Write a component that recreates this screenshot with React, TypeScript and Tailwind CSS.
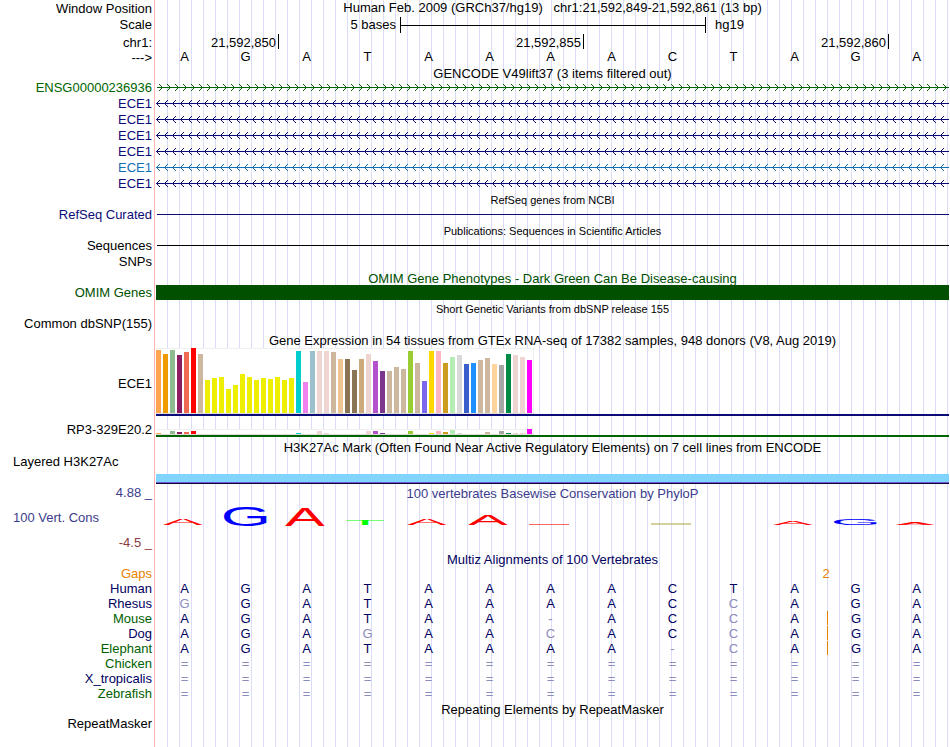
import type { ReactNode } from "react";

interface LabelProps {
  children?: ReactNode;
  className?: string;
}

interface RowProps {
  label?: ReactNode;
  labelClass?: string;
  className?: string;
  children?: ReactNode;
}

interface Tissue {
  color: string;
  ece1: number;
  rp3: number;
}

interface Species {
  name: string;
  color: string;
  bases: string;
  insertion?: boolean;
}

const t = (color: string, ece1: number, rp3 = 0): Tissue => ({ color, ece1, rp3 });

// GTEx tissues in track order, values are bar heights
const tissues: Tissue[] = [
  t("#ffa54f", 63, 1),
  t("#ee9a00", 59),
  t("#8fbc8f", 63, 3),
  t("#8b1c62", 58, 2),
  t("#ee6a50", 61, 2),
  t("#ff0000", 65, 3),
  t("#cdb79e", 59),
  t("#eeee00", 33),
  t("#eeee00", 35),
  t("#eeee00", 36),
  t("#eeee00", 24),
  t("#eeee00", 28),
  t("#eeee00", 39),
  t("#eeee00", 36),
  t("#eeee00", 33),
  t("#eeee00", 35),
  t("#eeee00", 34),
  t("#eeee00", 36),
  t("#eeee00", 33),
  t("#eeee00", 35),
  t("#00cdcd", 62, 1),
  t("#ee82ee", 31),
  t("#9ac0cd", 62),
  t("#eed5d2", 62, 3),
  t("#eed5d2", 62, 1),
  t("#cdb79e", 61),
  t("#eec591", 54),
  t("#8b7355", 54),
  t("#8b7355", 43),
  t("#cdaa7d", 54),
  t("#eed5d2", 59, 3),
  t("#b452cd", 52, 3),
  t("#7a378b", 42, 1),
  t("#cdb79e", 42),
  t("#cdb79e", 46),
  t("#cdb79e", 44),
  t("#9acd32", 62, 3),
  t("#cdb79e", 50),
  t("#7a67ee", 32),
  t("#ffd700", 62, 1),
  t("#ffb6c1", 62, 3),
  t("#cd9b1d", 50, 2),
  t("#b4eeb4", 56, 4),
  t("#d9d9d9", 58, 1),
  t("#3a5fcd", 49),
  t("#1e90ff", 50),
  t("#cdb79e", 53),
  t("#cdb79e", 55, 2),
  t("#ffd39b", 49),
  t("#a6a6a6", 48, 3),
  t("#008b45", 59, 1),
  t("#eed5d2", 58, 1),
  t("#eed5d2", 56, 1),
  t("#ff00ff", 53, 5),
];

const species: Species[] = [
  { name: "Human", color: "text-[#000060]", bases: "AGATAAAACTAGA" },
  { name: "Rhesus", color: "text-[#000060]", bases: "gGATAAAACcAGA" },
  { name: "Mouse", color: "text-[#006000]", bases: "AGATAA-ACcAGA", insertion: true },
  { name: "Dog", color: "text-[#000060]", bases: "AGAgAAcACcAGA", insertion: true },
  { name: "Elephant", color: "text-[#006000]", bases: "AGATAAAA-cAGA", insertion: true },
  { name: "Chicken", color: "text-[#006000]", bases: "=============" },
  { name: "X_tropicalis", color: "text-[#000060]", bases: "=============" },
  { name: "Zebrafish", color: "text-[#006000]", bases: "=============" },
];

const logoBoxes: Record<string, { box: string; baseline: number; color: string; width: string }> = {
  A: { box: "0 0 67 69", baseline: 69, color: "#ff0000", width: "w-[40px]" },
  G: { box: "5 0 68 71", baseline: 70, color: "#0000ff", width: "w-[44px]" },
  T: { box: "2 0 57 69", baseline: 69, color: "#00ff00", width: "w-[38px]" },
  C: { box: "5 0 63 71", baseline: 70, color: "#b9b35f", width: "w-[40px]" },
};

// letter height is the conservation score of the base
const logo = [
  { base: "A", height: 6 },
  { base: "G", height: 19 },
  { base: "A", height: 18 },
  { base: "T", height: 5 },
  { base: "A", height: 6 },
  { base: "A", height: 10 },
  { base: "A", height: 1 },
  { base: "A", height: 0 },
  { base: "C", height: 2 },
  { base: "T", height: 0 },
  { base: "A", height: 4 },
  { base: "G", height: 6 },
  { base: "A", height: 3 },
];

const Label = ({ children, className = "text-right" }: LabelProps) => (
  <div className="w-[156px] shrink-0 self-stretch bg-white pr-px">
    <div className={`h-full border-r border-[#ffb4b4] pr-[2px] whitespace-nowrap ${className}`}>
      {children}
    </div>
  </div>
);

const Row = ({ label, labelClass, className = "h-4 leading-4", children }: RowProps) => (
  <div className={`flex ${className}`}>
    <Label className={labelClass}>{label}</Label>
    <div className="min-w-0 flex-1">{children}</div>
  </div>
);

const TitleRow = ({
  children,
  className = "leading-[13px]",
  height = "h-4",
  label,
  labelClass,
}: RowProps & { height?: string }) => (
  <div className={`flex ${height}`}>
    <Label className={labelClass}>{label}</Label>
    <h2 className={`flex-1 self-end text-center whitespace-pre ${className}`}>{children}</h2>
  </div>
);

const GeneLine = ({ id, color, forward }: { id: string; color: string; forward?: boolean }) => (
  <svg className="block h-[15px] w-full" shapeRendering="crispEdges" fill={color}>
    <defs>
      <pattern id={id} width="8" height="15" patternUnits="userSpaceOnUse">
        {forward ? (
          <path d="M5 6h1v1h-1z M4 5h1v1h-1z M3 4h1v1h-1z M5 8h1v1h-1z M4 9h1v1h-1z M3 10h1v1h-1z" />
        ) : (
          <path d="M1 6h1v1h-1z M2 5h1v1h-1z M3 4h1v1h-1z M1 8h1v1h-1z M2 9h1v1h-1z M3 10h1v1h-1z" />
        )}
      </pattern>
    </defs>
    <rect width="100%" height="15" fill={`url(#${id})`} />
    <rect x={forward ? 1 : 0} y="7" width="100%" height="1" />
  </svg>
);

const Expression = ({ gene }: { gene: "ece1" | "rp3" }) => (
  <div className="flex w-[378px] items-end gap-[2px] bg-white shadow-[inset_-1px_1px_#f0f0f0]">
    {tissues.map((tissue, index) => (
      <div
        key={index}
        className="w-[5px] shrink-0"
        style={{ height: tissue[gene], backgroundColor: tissue.color }}
      />
    ))}
  </div>
);

const LogoLetter = ({ base, height }: { base: string; height: number }) => {
  const glyph = logoBoxes[base];
  if (height === 0) return <span />;
  // too flat for a letter, only a thin line is left
  if (height <= 2) {
    return (
      <div
        className={`mb-px ml-[7px] opacity-60 ${glyph.width}`}
        style={{ height, backgroundColor: glyph.color }}
      />
    );
  }
  return (
    <svg
      viewBox={glyph.box}
      preserveAspectRatio="none"
      className={`ml-[7px] block overflow-visible ${height < 18 ? "mb-px" : ""} ${glyph.width}`}
      style={{ height }}
    >
      <text x="0" y={glyph.baseline} fontSize="100" fill={glyph.color}>
        {base}
      </text>
    </svg>
  );
};

const genes = [
  { name: "ENSG00000236936", text: "text-[#006400]", color: "#006400", forward: true },
  { name: "ECE1", text: "text-[#0c0c78]", color: "#0c0c78" },
  { name: "ECE1", text: "text-[#0c0c78]", color: "#0c0c78" },
  { name: "ECE1", text: "text-[#0c0c78]", color: "#0c0c78" },
  { name: "ECE1", text: "text-[#0c0c78]", color: "#0c0c78" },
  { name: "ECE1", text: "text-[#1470b4]", color: "#1470b4" },
  { name: "ECE1", text: "text-[#0c0c78]", color: "#0c0c78" },
];

const App = () => {
  return (
    <main className="flex min-h-screen flex-col bg-white bg-[repeating-linear-gradient(to_right,transparent_0_11px,#dcdcf8_11px_12px)] pr-px font-['Liberation_Sans',Arial,sans-serif] text-[13px] text-black">
      {/* Position header */}
      <Row label="Window Position" className="h-[17px] leading-[17px]">
        <h1 className="text-center leading-4 whitespace-pre">
          {"Human Feb. 2009 (GRCh37/hg19)   chr1:21,592,849-21,592,861 (13 bp)"}
        </h1>
      </Row>
      <Row label="Scale">
        <div className="grid grid-cols-13">
          <span className="col-span-4 pr-1 text-right">5 bases</span>
          <div className="col-span-5 -mr-px flex h-4 items-center border-x border-black">
            <div className="h-px w-full bg-black" />
          </div>
          <span className="col-span-4 pl-[10px]">hg19</span>
        </div>
      </Row>
      <Row label="chr1:" className="h-[17px] leading-5">
        <div className="grid grid-cols-13 pt-px leading-[18px]">
          <span className="col-span-2 pr-[2px] text-right">21,592,850</span>
          <span className="col-span-5 h-[15px] border-l border-black pr-[2px] text-right">
            21,592,855
          </span>
          <span className="col-span-5 h-[15px] border-l border-black pr-[2px] text-right">
            21,592,860
          </span>
          <span className="h-[15px] border-l border-black" />
        </div>
      </Row>
      <Row label="--->" className="h-[14px] leading-[15px]">
        <div className="grid grid-cols-13 leading-[14px]">
          {"AGATAAAACTAGA".split("").map((base, index) => (
            <span key={index} className="pr-1 text-center">
              {base}
            </span>
          ))}
        </div>
      </Row>

      {/* Genes */}
      <TitleRow>GENCODE V49lift37 (3 items filtered out)</TitleRow>
      {genes.map((gene, index) => (
        <Row key={index} label={gene.name} labelClass={`text-right ${gene.text}`}>
          <GeneLine id={`gene-${index}`} color={gene.color} forward={gene.forward} />
        </Row>
      ))}
      <TitleRow height="h-[15px]" className="text-[11px] leading-[14px]">
        RefSeq genes from NCBI
      </TitleRow>
      <Row label="RefSeq Curated" labelClass="text-right text-[#0c0c78]">
        <div className="mt-[7px] ml-px h-px bg-[#0c0c78]" />
      </Row>
      <TitleRow height="h-[15px]" className="text-[11px] leading-[14px]">
        Publications: Sequences in Scientific Articles
      </TitleRow>
      <Row label="Sequences">
        <div className="mt-[7px] ml-px h-px bg-black" />
      </Row>
      <Row label="SNPs" />

      {/* Phenotypes and variants */}
      <TitleRow height="h-[15px]" className="leading-[13px] text-[#005000]">
        OMIM Gene Phenotypes - Dark Green Can Be Disease-causing
      </TitleRow>
      <Row label="OMIM Genes" labelClass="text-right text-[#005000]">
        <div className="h-[15px] bg-[#005000]" />
      </Row>
      <TitleRow height="h-[15px]" className="text-[11px] leading-[14px]">
        Short Genetic Variants from dbSNP release 155
      </TitleRow>
      <Row label="Common dbSNP(155)" />

      {/* Expression */}
      <TitleRow className="leading-[14px]">
        Gene Expression in 54 tissues from GTEx RNA-seq of 17382 samples, 948 donors (V8, Aug 2019)
      </TitleRow>
      <Row
        label="ECE1"
        labelClass="flex items-center justify-end pt-[4px]"
        className="h-[68px] leading-4"
      >
        <div className="flex h-full flex-col justify-end">
          <Expression gene="ece1" />
          <div className="h-px w-[378px] bg-[#dcdcdc]" />
          <div className="h-[2px] bg-[#0c0c78]" />
        </div>
      </Row>
      <Row
        label="RP3-329E20.2"
        labelClass="flex items-end justify-end"
        className="h-[21px] leading-[15px]"
      >
        <div className="flex h-full flex-col justify-end">
          <Expression gene="rp3" />
          <div className="h-px w-[378px] bg-[#dcdcdc]" />
          <div className="h-[2px] bg-[#006400]" />
        </div>
      </Row>

      {/* Regulation */}
      <TitleRow height="h-[17px]">
        H3K27Ac Mark (Often Found Near Active Regulatory Elements) on 7 cell lines from ENCODE
      </TitleRow>
      <Row label="Layered H3K27Ac" labelClass="pl-[13px]" className="h-[30px] leading-4">
        <div className="mt-5 h-2 bg-[#80d4ff]" />
        <div className="h-px bg-[#6a5acd]" />
        <div className="h-px bg-[#10003c]" />
      </Row>

      {/* Conservation */}
      <TitleRow
        label="4.88 _"
        labelClass="text-right leading-[18px] text-[#3c3c8c]"
        className="leading-[13px] text-[#3c3c8c]"
      >
        100 vertebrates Basewise Conservation by PhyloP
      </TitleRow>
      <Row
        label="100 Vert. Cons"
        labelClass="flex items-end pb-[9px] pl-[13px] text-[#3c3c8c]"
        className="h-[35px] leading-4"
      >
        <div className="grid h-full grid-cols-13 items-end pb-[9px]">
          {logo.map(({ base, height }, index) => (
            <LogoLetter key={index} base={base} height={height} />
          ))}
        </div>
      </Row>
      <Row label="-4.5 _" labelClass="text-right text-[#8c3c3c]" />

      {/* Alignment */}
      <TitleRow height="h-[15px]" className="leading-[13px] text-[#000060]">
        Multiz Alignments of 100 Vertebrates
      </TitleRow>
      <table className="w-full table-fixed border-separate border-spacing-0 leading-[15px]">
        <colgroup>
          <col className="w-[156px]" />
          <col span={13} />
        </colgroup>
        <tbody>
          <tr>
            <th scope="row" className="p-0 font-normal">
              <Label className="text-right text-[#e68200]">Gaps</Label>
            </th>
            <td colSpan={10} className="p-0" />
            <td colSpan={2} className="p-0 pr-[2px] text-center text-[#e68200]">
              2
            </td>
            <td className="p-0" />
          </tr>
          {species.map((item) => (
            <tr key={item.name}>
              <th scope="row" className="p-0 font-normal">
                <Label className={`text-right ${item.color}`}>{item.name}</Label>
              </th>
              {item.bases.split("").map((base, index) => {
                // lower case marks a base that differs from the reference
                const isMatch = /[A-Z]/.test(base);
                return (
                  <td key={index} className="p-0 align-top">
                    <div
                      className={`h-[14px] pr-1 text-center ${
                        isMatch ? "text-[#000060]" : "text-[#8c8cbe]"
                      } ${item.insertion && index === 11 ? "border-l border-[#e68200]" : ""}`}
                    >
                      {base.toUpperCase()}
                    </div>
                  </td>
                );
              })}
            </tr>
          ))}
        </tbody>
      </table>
      <TitleRow height="h-[15px]">Repeating Elements by RepeatMasker</TitleRow>
      <Row label="RepeatMasker" className="min-h-[15px] grow leading-[15px]" />
    </main>
  );
};

export default App;
